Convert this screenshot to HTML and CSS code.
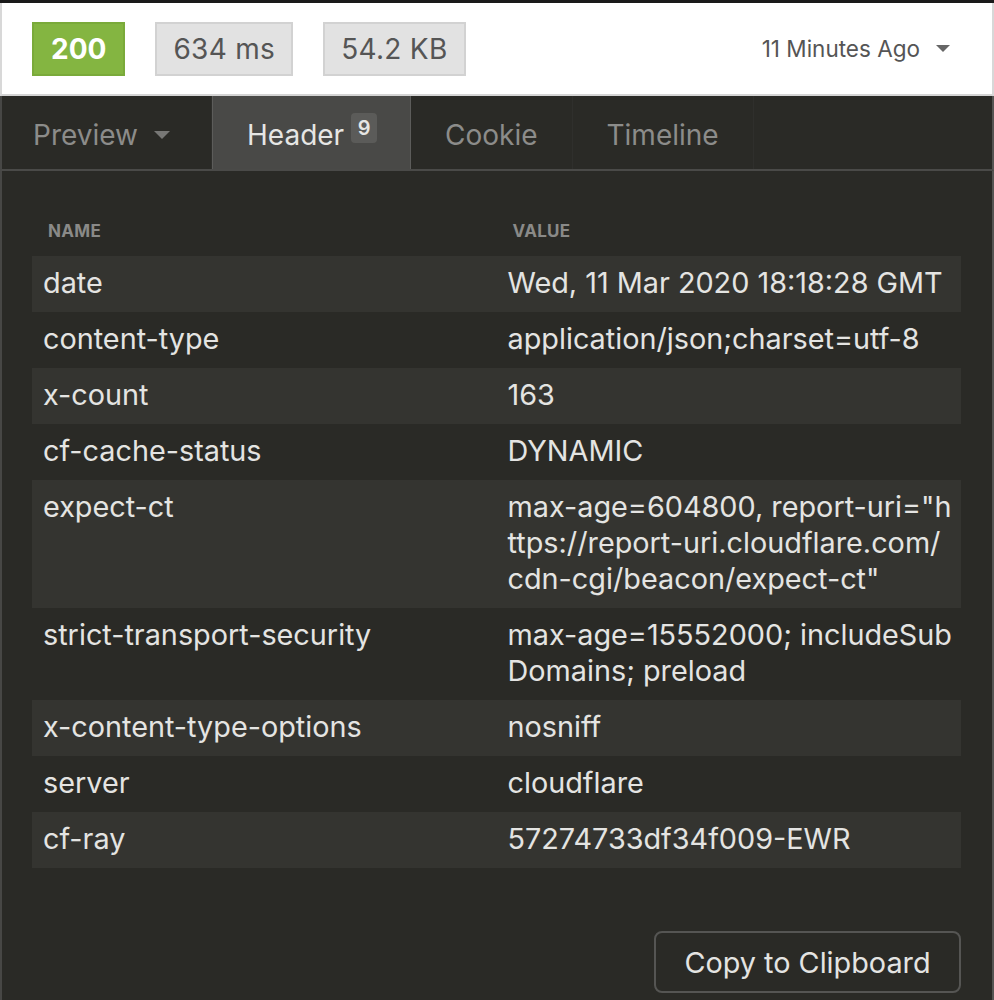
FILE: index.html
```html
<!DOCTYPE html>
<html>
<head>
<meta charset="utf-8">
<link rel="stylesheet" href="styles.css">
</head>
<body>
<div class="pane">
  <div class="status">
    <div class="pill pill-ok">200</div>
    <div class="pill">634 ms</div>
    <div class="pill">54.2 KB</div>
    <div class="history">11 Minutes Ago <span class="caret caret-small"></span></div>
  </div>
  <div class="tabs">
    <div class="tab">Preview <span class="caret caret-tab"></span></div>
    <div class="tab tab-active">Header <span class="count">9</span></div>
    <div class="tab">Cookie</div>
    <div class="tab">Timeline</div>
  </div>
  <div class="body">
    <table class="headers">
      <thead>
        <tr><th>Name</th><th>Value</th></tr>
      </thead>
      <tbody>
        <tr><td>date</td><td>Wed, 11 Mar 2020 18:18:28 GMT</td></tr>
        <tr><td>content-type</td><td>application/json;charset=utf-8</td></tr>
        <tr><td>x-count</td><td>163</td></tr>
        <tr><td>cf-cache-status</td><td>DYNAMIC</td></tr>
        <tr><td>expect-ct</td><td>max-age=604800, report-uri="https://report-uri.cloudflare.com/cdn-cgi/beacon/expect-ct"</td></tr>
        <tr><td>strict-transport-security</td><td>max-age=15552000; includeSubDomains; preload</td></tr>
        <tr><td>x-content-type-options</td><td>nosniff</td></tr>
        <tr><td>server</td><td>cloudflare</td></tr>
        <tr><td>cf-ray</td><td>57274733df34f009-EWR</td></tr>
      </tbody>
    </table>
    <div class="actions">
      <button class="copy">Copy to Clipboard</button>
    </div>
  </div>
</div>
</body>
</html>
```

FILE: styles.css
```css
* { box-sizing: border-box; }
html, body { margin: 0; padding: 0; background: #2a2a26; }
body {
  font-family: Inter, "Noto Sans", "Liberation Sans", sans-serif;
  height: 1000px;
  overflow: hidden;
}
.pane {
  border-top: 3px solid #1a1a1a;
  height: 1000px;
  display: flex;
  flex-direction: column;
}
.status {
  height: 93px;
  background: #fff;
  border-left: 2px solid #d8d8d8;
  border-right: 2px solid #d8d8d8;
  border-bottom: 2px solid #d4d4d4;
  display: flex;
  align-items: center;
  padding: 0 42px 0 30px;
  gap: 30px;
}
.pill {
  height: 54px;
  display: flex;
  align-items: center;
  padding: 0 16px;
  font-size: 28px;
  color: #555;
  background: #e2e2e2;
  border: 2px solid #d2d2d2;
  letter-spacing: 0.3px;
}
.pill-ok {
  background: #84b541;
  border-color: #7aaa3a;
  color: #fff;
  font-weight: 700;
  padding: 0 17px;
  letter-spacing: 0;
}
.history {
  margin-left: auto;
  font-size: 22.5px;
  color: #555;
  display: flex;
  align-items: center;
  gap: 16px;
}
.caret {
  display: inline-block;
  width: 0;
  height: 0;
  border-style: solid;
  border-color: transparent;
}
.caret-small {
  border-width: 7px 7px 0 7px;
  border-top-color: #666;
}
.tabs {
  height: 75px;
  display: flex;
  background: #2a2a26;
  border-left: 2px solid #474745;
  border-right: 2px solid #555553;
  border-bottom: 2px solid #4a4a48;
}
.tab {
  display: flex;
  align-items: center;
  padding: 5px 34px 0;
  font-size: 28px;
  color: #8c8c8a;
  border-right: 1px solid #2f2f2c;
}
.tab:first-child { padding-left: 31px; width: 210px; }
.tab-active {
  background: #494947;
  color: #e6e6e4;
  border-left: 1px solid #5c5c5a;
  border-right: 1px solid #5c5c5a;
  width: 199px;
  padding-left: 34px;
}
.caret-tab {
  margin-left: 16px;
  border-width: 8px 8px 0 8px;
  border-top-color: #777775;
}
.count {
  align-self: flex-start;
  margin-top: 12px;
  margin-left: 7px;
  background: #5b5b59;
  color: #e6e6e4;
  border-radius: 4px;
  font-size: 20px;
  font-weight: 600;
  height: 30px;
  min-width: 26px;
  display: flex;
  align-items: center;
  justify-content: center;
}
.body {
  flex: 1;
  border-left: 2px solid #474745;
  border-right: 2px solid #555553;
  padding: 44px 31px 0 30px;
  display: flex;
  flex-direction: column;
}
.headers {
  width: 100%;
  border-collapse: collapse;
  table-layout: fixed;
}
.headers th {
  text-align: left;
  font-size: 17px;
  font-weight: 700;
  text-transform: uppercase;
  color: #8a8a88;
  padding: 6px 16px 15px;
  letter-spacing: 0.3px;
}
.headers td {
  font-size: 28.8px;
  line-height: 36px;
  color: #e4e4e2;
  padding: 9px 11px 11px 11px;
  vertical-align: top;
  word-break: break-all;
}
.headers td:last-child { padding-right: 6px; }
.headers tbody tr:nth-child(odd) { background: #343430; }
.actions {
  display: flex;
  justify-content: flex-end;
  padding-top: 63px;
}
.copy {
  font-family: inherit;
  font-size: 28.8px;
  color: #e4e4e2;
  background: transparent;
  border: 2px solid #555553;
  border-radius: 8px;
  height: 62px;
  padding: 0 20px;
  width: 307px;
}
```
